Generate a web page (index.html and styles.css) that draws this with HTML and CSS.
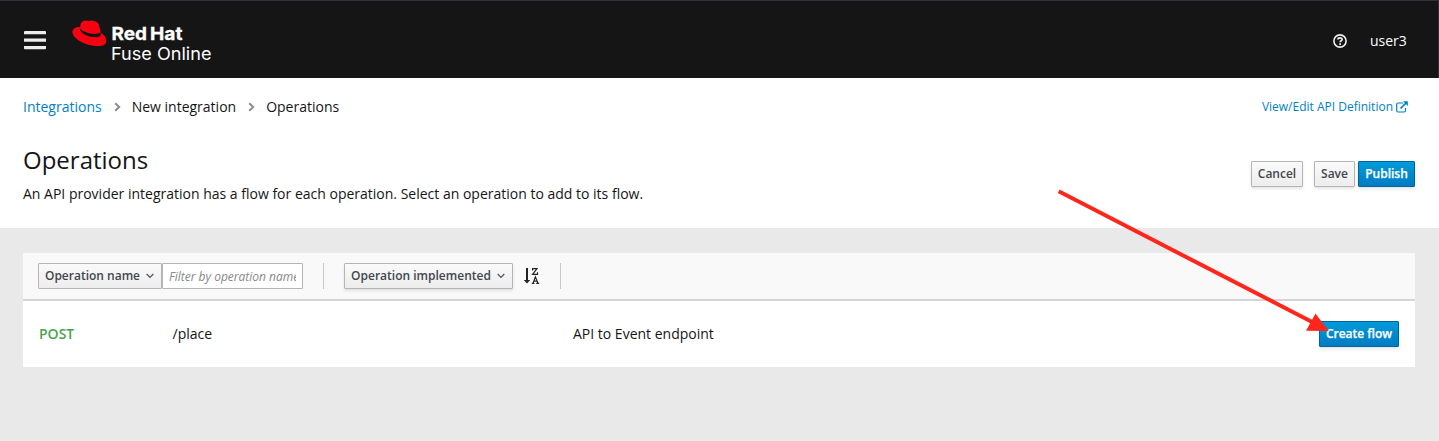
FILE: index.html
```html
<!DOCTYPE html>
<html lang="en">
<head>
<meta charset="utf-8">
<title>Operations</title>
<link rel="stylesheet" href="styles.css">
</head>
<body>
<header class="masthead">
  <svg class="menu" width="22" height="19" viewBox="0 0 22 19"><path fill="#ededed" d="M1 0h20a1 1 0 0 1 1 1v2.300H0V1a1 1 0 0 1 1-1zM0 7.500h22v3.200H0zM0 15h22v2.500a.8.8 0 0 1-.8.8H.8a.8.8 0 0 1-.8-.8z"/></svg>
  <svg class="logo" width="142" height="48" viewBox="0 0 142 48">
    <path fill="#f80012" d="M8 7C8.500 4 9 1.500 11.500.9C14-.1 15 1.300 17 1C19 .7 19 .1 21 .8C25 1.600 26.300 3 27 5.500L29 13C32.500 15 35 18.500 34 22.500C33 26.500 26 26.500 20 25.500C11 24 1 18.500 .4 12.500C0 8.500 4 7 8 7z"/>
    <path fill="#151515" d="M7.800 7.700C7 12 14 16.400 21 17.100C25.500 17.600 28.800 16.500 28.800 14.800L28.100 11.700C27.800 13.600 24.500 14.300 20.500 13.800C14.500 13 8.800 10.600 7.800 7.700z"/>
    <g class="wordmark">
      <text class="brand" x="39.500" y="20" textLength="35.500" lengthAdjust="spacingAndGlyphs">Red</text>
      <text class="brand" x="78" y="20" textLength="32.500" lengthAdjust="spacingAndGlyphs">Hat</text>
      <text class="product" x="39" y="39.500" textLength="100.500" lengthAdjust="spacingAndGlyphs">Fuse Online</text>
    </g>
  </svg>
  <div class="tools">
    <svg width="14" height="14" viewBox="0 0 14 14" fill="none" stroke="#ededed"><circle cx="7" cy="7" r="6.100" stroke-width="1.600"/><path stroke-width="1.700" d="M4.900 5.500C5 3.500 9.100 3.400 9.100 5.500C9.100 6.900 7.200 6.700 7.100 8.300M7.100 9.200v1.700"/></svg>
    <span class="user">user3</span>
  </div>
</header>
<section class="heading">
  <nav class="crumbs">
    <a class="link">Integrations</a>
    <svg width="7" height="10" viewBox="0 0 7 10"><path d="M1.200 1.200 5.200 5 1.200 8.800"/></svg>
    <span>New integration</span>
    <svg width="7" height="10" viewBox="0 0 7 10"><path d="M1.200 1.200 5.200 5 1.200 8.800"/></svg>
    <span>Operations</span>
    <a class="link definition">View/Edit API Definition
      <svg width="12" height="12" viewBox="0 0 12 12"><path d="M7 2H2Q.7 2 .7 3.300V9.500Q.7 11 2 11H8Q9.500 11 9.500 9.500V7"/><path class="shaft" d="M4.500 7.500 10 2"/><path class="tip" d="M7 .2h4.800V5z"/></svg>
    </a>
  </nav>
  <div class="title-row">
    <div>
      <h1>Operations</h1>
      <p>An API provider integration has a flow for each operation. Select an operation to add to its flow.</p>
    </div>
    <div class="actions">
      <button class="btn cancel">Cancel</button>
      <button class="btn save">Save</button>
      <button class="btn primary publish">Publish</button>
    </div>
  </div>
</section>
<main class="card">
  <div class="toolbar">
    <button class="btn name-filter">Operation name <svg width="8" height="6" viewBox="0 0 8 6"><path d="m.7 1 3.300 3.300L7.300 1"/></svg></button>
    <input class="filter" placeholder="Filter by operation name" aria-label="Filter">
    <span class="divider"></span>
    <button class="btn sort">Operation implemented <svg width="8" height="6" viewBox="0 0 8 6"><path d="m.7 1 3.300 3.300L7.300 1"/></svg></button>
    <svg class="sort-icon" width="16" height="18" viewBox="0 0 16 18"><path d="M2 1h2v12h2.200L3 16.500-.2 13H2z"/><path class="letters" d="M8.600 3.600V1.600h4.400L8.600 7.300h4.900V5.300M7.800 16.400h2.700M12.200 16.400h3M9 16.400l2.400-6.500 2.600 6.500M10 14.200h3"/></svg>
    <span class="divider second"></span>
  </div>
  <div class="row">
    <span class="method">POST</span>
    <span class="path">/place</span>
    <span>API to Event endpoint</span>
    <button class="btn primary create">Create flow</button>
  </div>
</main>
<svg class="arrow" width="280" height="150" viewBox="1054 186 280 150"><path stroke="#ff261c" stroke-width="4" d="M1058.700 191.300 1316 324"/><path fill="#ff261c" d="M1315.500 313.500 1306 330.700 1328.700 331z"/></svg>
</body>
</html>
```
FILE: styles.css
```css
* { box-sizing: border-box; }
body {
  margin: 0;
  height: 441px;
  overflow: hidden;
  position: relative;
  background: #e9e9e9;
  color: #151515;
  font: 14px/20px "Open Sans", sans-serif;
}
.masthead {
  height: 78px;
  padding: 0 31px 0 24px;
  display: flex;
  align-items: flex-start;
  background: #151515;
  border-top: 1px solid #303036;
  border-right: 1px solid #303036;
}
.menu { margin-top: 30px; }
.logo { margin: 19px 0 0 25.500px; }
.wordmark { fill: #fff; font-family: Inter, sans-serif; }
.brand { font-size: 17.500px; font-weight: 700; stroke: #fff; stroke-width: .3; }
.product { font-size: 17.500px; }
.tools { margin: 29px 0 0 auto; display: flex; align-items: center; gap: 23px; color: #fff; }
.user { width: 37px; padding-top: 1px; }
.heading { height: 150px; background: #fff; padding: 19px 24px 0 23px; }
.crumbs { display: flex; align-items: center; height: 20px; }
.crumbs > svg { margin: 0 11px 0 12px; fill: none; stroke: #8a8d90; stroke-width: 2; }
.link { color: #0080c8; }
.definition { margin: 0 7px 0 auto; font-size: 12px; display: flex; align-items: center; gap: 3px; }
.definition path { fill: none; stroke: #0080c8; stroke-width: 1.2; }
.definition .shaft { stroke-width: 1.700; }
.definition .tip { fill: #0080c8; stroke: none; }
.title-row { display: flex; justify-content: space-between; padding-top: 25px; }
h1 { margin: 0; font-size: 24px; line-height: 36px; font-weight: 400; }
p { margin: 6px 0 0; }
.actions { display: flex; margin-top: 19px; }
.btn {
  height: 26px;
  padding: 0;
  display: inline-flex;
  align-items: center;
  justify-content: center;
  flex-shrink: 0;
  gap: 6px;
  border: 1px solid #b5b5b5;
  border-radius: 1px;
  background: linear-gradient(#fafafa, #ededed);
  box-shadow: 0 2px 3px rgba(3, 3, 3, .1);
  color: #42474d;
  font: 600 12px/18px "Open Sans", sans-serif;
  white-space: nowrap;
}
.btn svg { fill: none; stroke: #4d5258; stroke-width: 1.2; }
.cancel { width: 52px; margin-right: 11px; }
.save { width: 41px; margin-right: 3px; }
.publish { width: 57px; }
.primary { border-color: #00659c; background: linear-gradient(#009bd9, #007bc4); color: #fff; -webkit-text-stroke: .25px #fff; }
.card { margin: 25px 24px 0 23px; }
.toolbar { display: flex; align-items: center; height: 48px; padding: 0 15px; background: #f9f9f9; border-bottom: 2px solid #d1d1d1; border-bottom-color: #d4d4d4; }
.name-filter { width: 124px; padding-right: 1px; box-shadow: none; }
.filter {
  width: 141px;
  height: 26px;
  padding: 0 6px;
  border: 1px solid #b5b5b5;
  border-radius: 0 1px 1px 0;
  background: #fff;
  font: 12px "Open Sans", sans-serif;
}
.filter::placeholder { color: #888; font-style: italic; opacity: 1; }
.divider { width: 1px; height: 26px; margin: 0 20px; background: #c8c8c8; }
.sort { width: 169px; padding-right: 1px; }
.sort-icon { margin-left: 11px; fill: #222; overflow: visible; }
.sort-icon .letters { fill: none; stroke: #222; stroke-width: 1.2; }
.second { margin-left: 20px; }
.row { display: flex; align-items: center; height: 66px; padding: 0 16px; background: #fff; }
.method { width: 133.500px; color: #4aa350; font-weight: 600; }
.path { width: 400.500px; }
.create { width: 80px; margin-left: auto; }
.arrow { position: absolute; left: 1054px; top: 186px; pointer-events: none; }
```
